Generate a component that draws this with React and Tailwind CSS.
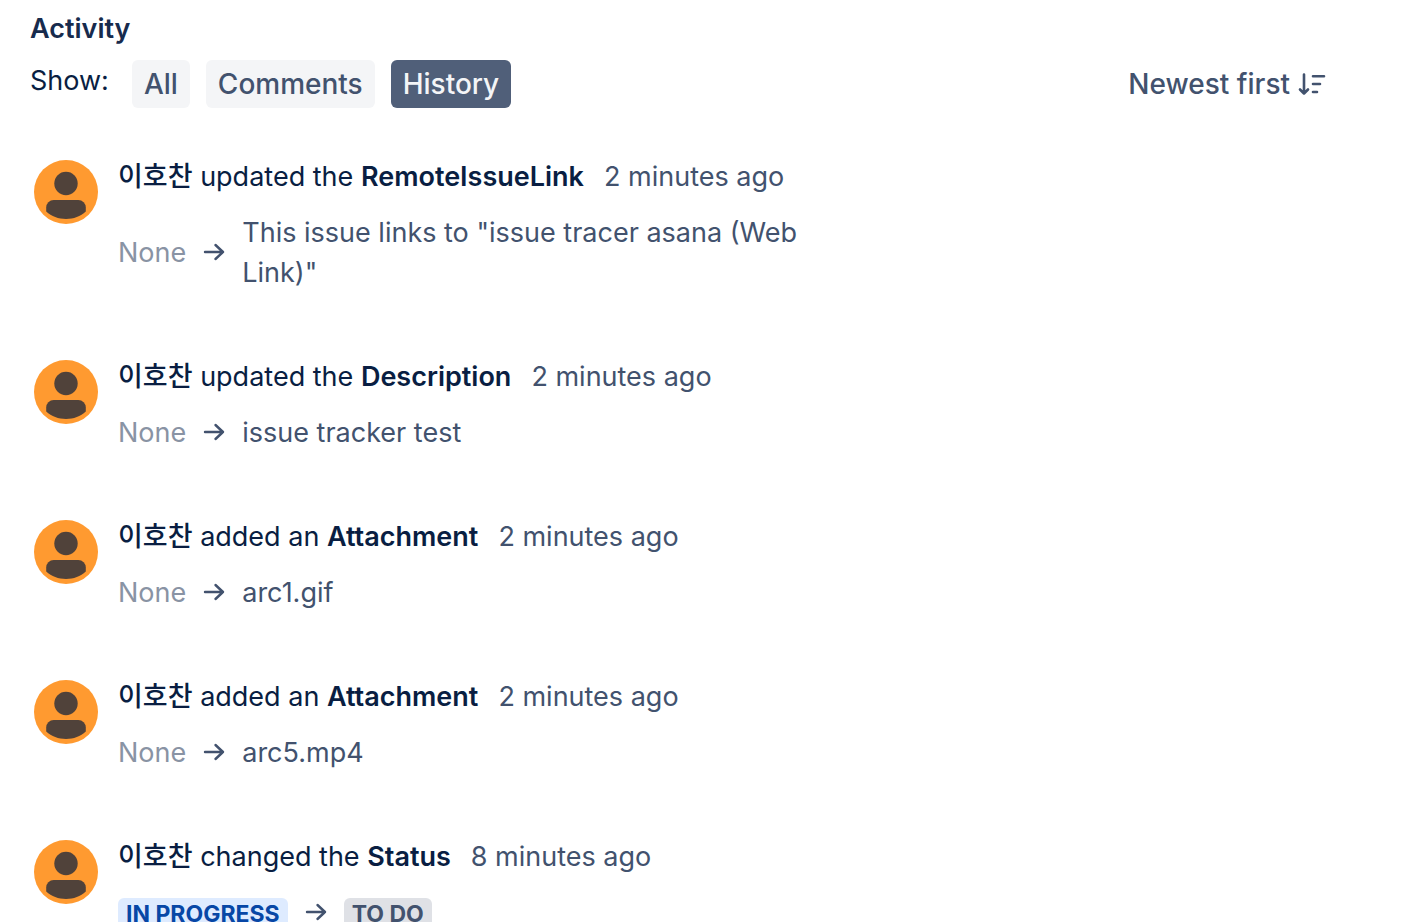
import { clsx } from "clsx";

const TABS = ["All", "Comments", "History"];

const ITEMS = [
  {
    id: 1,
    action: "updated the",
    field: "RemoteIssueLink",
    time: "2 minutes ago",
    from: "None",
    to: 'This issue links to "issue tracer asana (Web Link)"',
  },
  { id: 2, action: "updated the", field: "Description", time: "2 minutes ago", from: "None", to: "issue tracker test" },
  { id: 3, action: "added an", field: "Attachment", time: "2 minutes ago", from: "None", to: "arc1.gif" },
  { id: 4, action: "added an", field: "Attachment", time: "2 minutes ago", from: "None", to: "arc5.mp4" },
  { id: 5, action: "changed the", field: "Status", time: "8 minutes ago", from: "In Progress", to: "To Do", status: true },
];

function Avatar() {
  return (
    <svg viewBox="0 0 64 64" className="mt-[3px] size-16 shrink-0" aria-hidden="true">
      <circle cx="32" cy="32" r="32" fill="#ff9a30" />
      <circle cx="32" cy="23.5" r="11.7" fill="#50423a" />
      <path d="M12.2 47.5a7.5 7.5 0 0 1 7.5-7.5h24.6a7.5 7.5 0 0 1 7.5 7.5v4C46.5 56.3 39.6 59 32 59s-14.5-2.7-19.8-7.5z" fill="#50423a" />
    </svg>
  );
}

function ArrowIcon() {
  return (
    <svg viewBox="0 0 22 20" className="h-5 w-[22px] shrink-0" fill="none" stroke="#42526e" strokeWidth="2.4" strokeLinecap="round" strokeLinejoin="round" aria-hidden="true">
      <path d="M2 9h18M12.5 2l7.5 7-7.5 7" />
    </svg>
  );
}

function SortIcon() {
  return (
    <svg viewBox="0 0 28 24" className="h-6 w-7" fill="none" stroke="currentColor" strokeWidth="2.6" strokeLinecap="round" strokeLinejoin="round" aria-hidden="true">
      <path d="M6 2.5v19M2 17.500l4 4 4-4M15 4.200h11M15 12h7M15 20h4" />
    </svg>
  );
}

function Lozenge({ children, blue }) {
  return (
    <span
      className={clsx(
        "mt-[5px] mb-[3px] h-8 rounded-md px-2 text-[23px] leading-8 font-bold uppercase",
        blue ? "bg-[#deebff] text-[#0747a6]" : "bg-[#dfe1e6] text-[#42526e]"
      )}>
      {children}
    </span>
  );
}

function HistoryItem({ item }) {
  return (
    <li className="flex gap-5">
      <Avatar />
      <div className="min-w-0 flex-1">
        <div className="flex gap-5">
          <p>
            <span className="font-medium">이호찬</span> {item.action}{" "}
            <strong className="font-semibold">{item.field}</strong>
          </p>
          <time className="text-[#42526e]">{item.time}</time>
        </div>
        <div className="mt-4 flex max-w-[700px] items-center gap-[17px] text-[#42526e]">
          {item.status ? <Lozenge blue>{item.from}</Lozenge> : <span className="text-[#8993a4]">{item.from}</span>}
          <ArrowIcon />
          {item.status ? <Lozenge>{item.to}</Lozenge> : <span>{item.to}</span>}
        </div>
      </div>
    </li>
  );
}

export default function App() {
  return (
    <main className="h-screen overflow-hidden bg-white pt-[9px] pr-[82px] pl-[30px] font-['Inter','Noto_Sans_CJK_KR',sans-serif] text-[27px] leading-10 text-[#091e42]">
      <h2 className="font-semibold text-[#172b4d]">Activity</h2>

      <div className="mt-[11px] flex items-start justify-between">
        <div className="flex items-start gap-[23px]">
          <span className="pt-px">Show:</span>
          <div className="flex gap-4">
            {TABS.map(tab => (
              <button
                key={tab}
                type="button"
                aria-pressed={tab === "History"}
                className={clsx(
                  "h-12 rounded-md px-3 text-[28px] font-medium",
                  tab === "History" ? "bg-[#505f79] text-[#f4f5f7]" : "bg-[#f4f5f7] text-[#42526e]"
                )}>
                {tab}
              </button>
            ))}
          </div>
        </div>
        <button type="button" className="flex h-12 items-center gap-2 text-[28px] font-medium text-[#42526e]">
          Newest first
          <SortIcon />
        </button>
      </div>

      <ul className="mt-[49px] flex flex-col gap-16 pl-1">
        {ITEMS.map(item => (
          <HistoryItem key={item.id} item={item} />
        ))}
      </ul>
    </main>
  );
}
